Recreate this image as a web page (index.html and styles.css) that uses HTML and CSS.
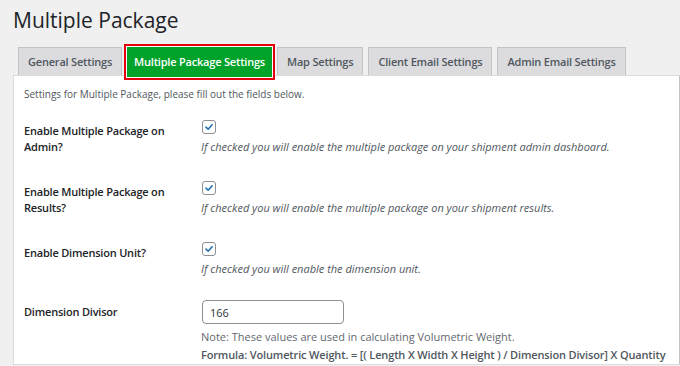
FILE: index.html
```html
<!DOCTYPE html>
<html lang="en">
<head>
    <meta charset="UTF-8">
    <title>Multiple Package</title>
    <link rel="stylesheet" href="styles.css">
</head>
<body>
    <div class="wrap">
        <h1>Multiple Package</h1>

        <nav class="tabs">
            <a class="tab" href="#">General Settings</a>
            <a class="tab active" href="#">Multiple Package Settings</a>
            <a class="tab" href="#">Map Settings</a>
            <a class="tab" href="#">Client Email Settings</a>
            <a class="tab" href="#">Admin Email Settings</a>
        </nav>

        <div class="panel">
            <p class="intro">Settings for Multiple Package, please fill out the fields below.</p>

            <div class="row">
                <div class="label">Enable Multiple Package on Admin?</div>
                <div class="field">
                    <span class="check"><svg viewBox="0 0 14 14" width="14" height="14"><path d="M3.5 7.2 L6 9.6 L10.6 4.4" fill="none" stroke="#2271b1" stroke-width="1.9" stroke-linecap="round" stroke-linejoin="round"/></svg></span>
                    <p class="desc">If checked you will enable the multiple package on your shipment admin dashboard.</p>
                </div>
            </div>

            <div class="row">
                <div class="label">Enable Multiple Package on Results?</div>
                <div class="field">
                    <span class="check"><svg viewBox="0 0 14 14" width="14" height="14"><path d="M3.5 7.2 L6 9.6 L10.6 4.4" fill="none" stroke="#2271b1" stroke-width="1.9" stroke-linecap="round" stroke-linejoin="round"/></svg></span>
                    <p class="desc">If checked you will enable the multiple package on your shipment results.</p>
                </div>
            </div>

            <div class="row">
                <div class="label">Enable Dimension Unit?</div>
                <div class="field">
                    <span class="check"><svg viewBox="0 0 14 14" width="14" height="14"><path d="M3.5 7.2 L6 9.6 L10.6 4.4" fill="none" stroke="#2271b1" stroke-width="1.9" stroke-linecap="round" stroke-linejoin="round"/></svg></span>
                    <p class="desc">If checked you will enable the dimension unit.</p>
                </div>
            </div>

            <div class="row row-input">
                <div class="label">Dimension Divisor</div>
                <div class="field">
                    <input class="text" type="text" value="166">
                    <p class="note">Note: These values are used in calculating Volumetric Weight.</p>
                    <p class="formula">Formula: Volumetric Weight. = [( Length X Width X Height ) / Dimension Divisor] X Quantity</p>
                </div>
            </div>
        </div>
    </div>
</body>
</html>
```

FILE: styles.css
```css
html, body {
    margin: 0;
    padding: 0;
    background: #f0f0f1;
}
body {
    font-family: 'Open Sans', 'Noto Sans', sans-serif;
    font-size: 11px;
    color: #1d2327;
    width: 680px;
    height: 366px;
    overflow: hidden;
}
.wrap {
    padding: 0 0 0 13px;
}
h1 {
    margin: 0;
    padding: 5px 0 0 0;
    font-size: 21px;
    font-weight: 400;
    line-height: 30px;
    color: #1d2327;
}
.tabs {
    display: flex;
    gap: 5px;
    margin-top: 12px;
    padding-left: 5px;
    height: 28px;
}
.tab {
    display: block;
    height: 27px;
    line-height: 27px;
    padding: 0 9px;
    background: #dcdcde;
    border: 1px solid #c3c4c7;
    border-bottom: none;
    color: #50575e;
    font-size: 11px;
    font-weight: 600;
    letter-spacing: -0.2px;
    text-decoration: none;
    white-space: nowrap;
}
.tab.active {
    padding: 0 6px;
    background: #00a32a;
    border-color: #00a32a;
    color: #fff;
    height: 29px;
    box-shadow: 0 0 0 1px #fff, 0 0 0 3px #e2000f;
    position: relative;
    z-index: 1;
}
.panel {
    background: #fff;
    border: 1px solid #dcdcde;
    border-right-color: #c3c4c7;
    height: 288px;
    padding: 0 0 0 10px;
}
.intro {
    margin: 10px 0 0 0;
    line-height: 16px;
    font-size: 10px;
    color: #50575e;
}
.row {
    display: grid;
    grid-template-columns: 177px 1fr;
    padding: 13px 0;
}
.row:first-of-type {
    padding-top: 18px;
}
.label {
    font-size: 11px;
    font-weight: 600;
    letter-spacing: -0.2px;
    line-height: 16px;
    padding-top: 3px;
    padding-right: 12px;
}
.check {
    display: block;
    width: 12px;
    height: 12px;
    border: 1px solid #8c8f94;
    border-radius: 3px;
    margin-left: 1px;
}
.check svg {
    display: block;
    width: 12px;
    height: 12px;
}
.desc {
    margin: 5px 0 0 0;
    font-style: italic;
    font-size: 11px;
    line-height: 16px;
    color: #50575e;
}
.row-input {
    padding-top: 10px;
}
.row-input .label {
    padding-top: 4px;
}
.text {
    display: block;
    box-sizing: border-box;
    width: 142px;
    height: 24px;
    margin-left: 1px;
    padding: 0 7px;
    border: 1px solid #8c8f94;
    border-radius: 4px;
    font-family: inherit;
    font-size: 11px;
    color: #2c3338;
}
.note {
    margin: 5px 0 0 0;
    font-size: 11px;
    line-height: 16px;
    color: #646970;
}
.formula {
    margin: 2px 0 0 0;
    font-size: 11px;
    font-weight: 600;
    letter-spacing: -0.15px;
    line-height: 16px;
    white-space: nowrap;
    color: #50575e;
}
```
